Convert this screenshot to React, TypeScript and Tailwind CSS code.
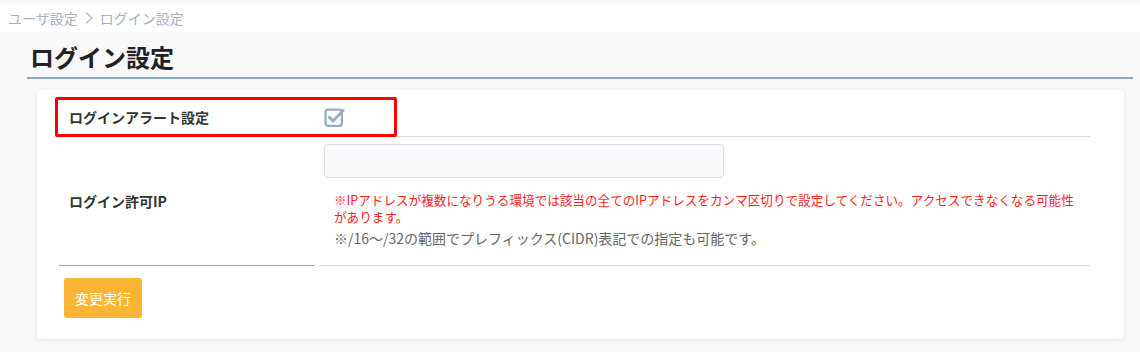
const font = { fontFamily: '"Noto Sans CJK JP", "Noto Sans", sans-serif' }

function CheckIcon() {
  return (
    <svg width="21" height="21" viewBox="0 0 20 20" fill="none">
      <rect x="1.5" y="2.5" width="15.5" height="15.5" rx="2.2" stroke="#97aec8" strokeWidth="2.2" />
      <path d="M5 9.8l3.6 3.6L18.2 3.4" stroke="#97aec8" strokeWidth="2.8" strokeLinecap="round" strokeLinejoin="round" />
    </svg>
  )
}

export default function App() {
  return (
    <div className="min-h-[352px] bg-[#f8f8f8] pt-1" style={font}>
      {/* breadcrumb */}
      <div className="flex h-7 items-center gap-1.5 bg-white px-2 text-[14px] text-[#a3b1c2]">
        <span>ユーザ設定</span>
        <svg width="10" height="14" viewBox="0 0 10 14" fill="none">
          <path d="M2 1.5l6 5.5-6 5.5" stroke="#c0c0c0" strokeWidth="1.6" />
        </svg>
        <span>ログイン設定</span>
      </div>

      <div className="mx-[27px] w-[1106px]">
        <h1 className="border-b-2 border-[#8ea8c3] pb-[5px] pl-[3px] pt-[9px] text-[24px] font-bold leading-[31px] text-[#222]">
          ログイン設定
        </h1>

        <div className="relative mx-[10px] mt-[11px] w-[1087px] rounded bg-white pb-[21px] pl-[22px] pr-[34px] pt-2 shadow-[0_1px_4px_rgba(0,0,0,0.08)]">
          {/* row 1 */}
          <div className="flex">
            <div className="flex h-[39px] w-[256px] items-center pl-[10px] text-[14px] font-bold text-[#333]">
              ログインアラート設定
            </div>
            <div className="ml-1 flex h-[39px] flex-1 items-center border-b border-[#cfdde9] pl-[5px]">
              <CheckIcon />
            </div>
          </div>

          {/* row 2 */}
          <div className="mt-px flex gap-1">
            <div className="flex w-[256px] items-center border-b border-[#8ea6c0] pl-[10px] text-[14px] font-bold text-[#333]">
              ログイン許可IP
            </div>
            <div className="flex-1 border-b border-[#cfdde9] pb-[16px] pl-[5px] pt-[6px]">
              <div className="h-[34px] w-[400px] rounded border border-[#dcdfe3] bg-[#f9fafc]" />
              <div className="mt-[13px] pl-[10px] pr-[12px]">
                <p className="text-[12.6px] leading-[17px] text-[#ff1e1e]">
                  ※IPアドレスが複数になりうる環境では該当の全てのIPアドレスをカンマ区切りで設定してください。アクセスできなくなる可能性があります。
                </p>
                <p className="mt-[2px] text-[14px] leading-[22px] text-[#666]">
                  ※/16〜/32の範囲でプレフィックス(CIDR)表記での指定も可能です。
                </p>
              </div>
            </div>
          </div>

          <button className="ml-[5px] mt-3 h-10 rounded-[3px] bg-[#fbb433] px-[11px] text-[14px] text-white">
            変更実行
          </button>

          {/* highlight annotation */}
          <div className="absolute left-[18px] top-[7px] h-[40px] w-[342px] rounded-[2px] border-[3px] border-[#ff0000]" />
        </div>
      </div>
    </div>
  )
}
